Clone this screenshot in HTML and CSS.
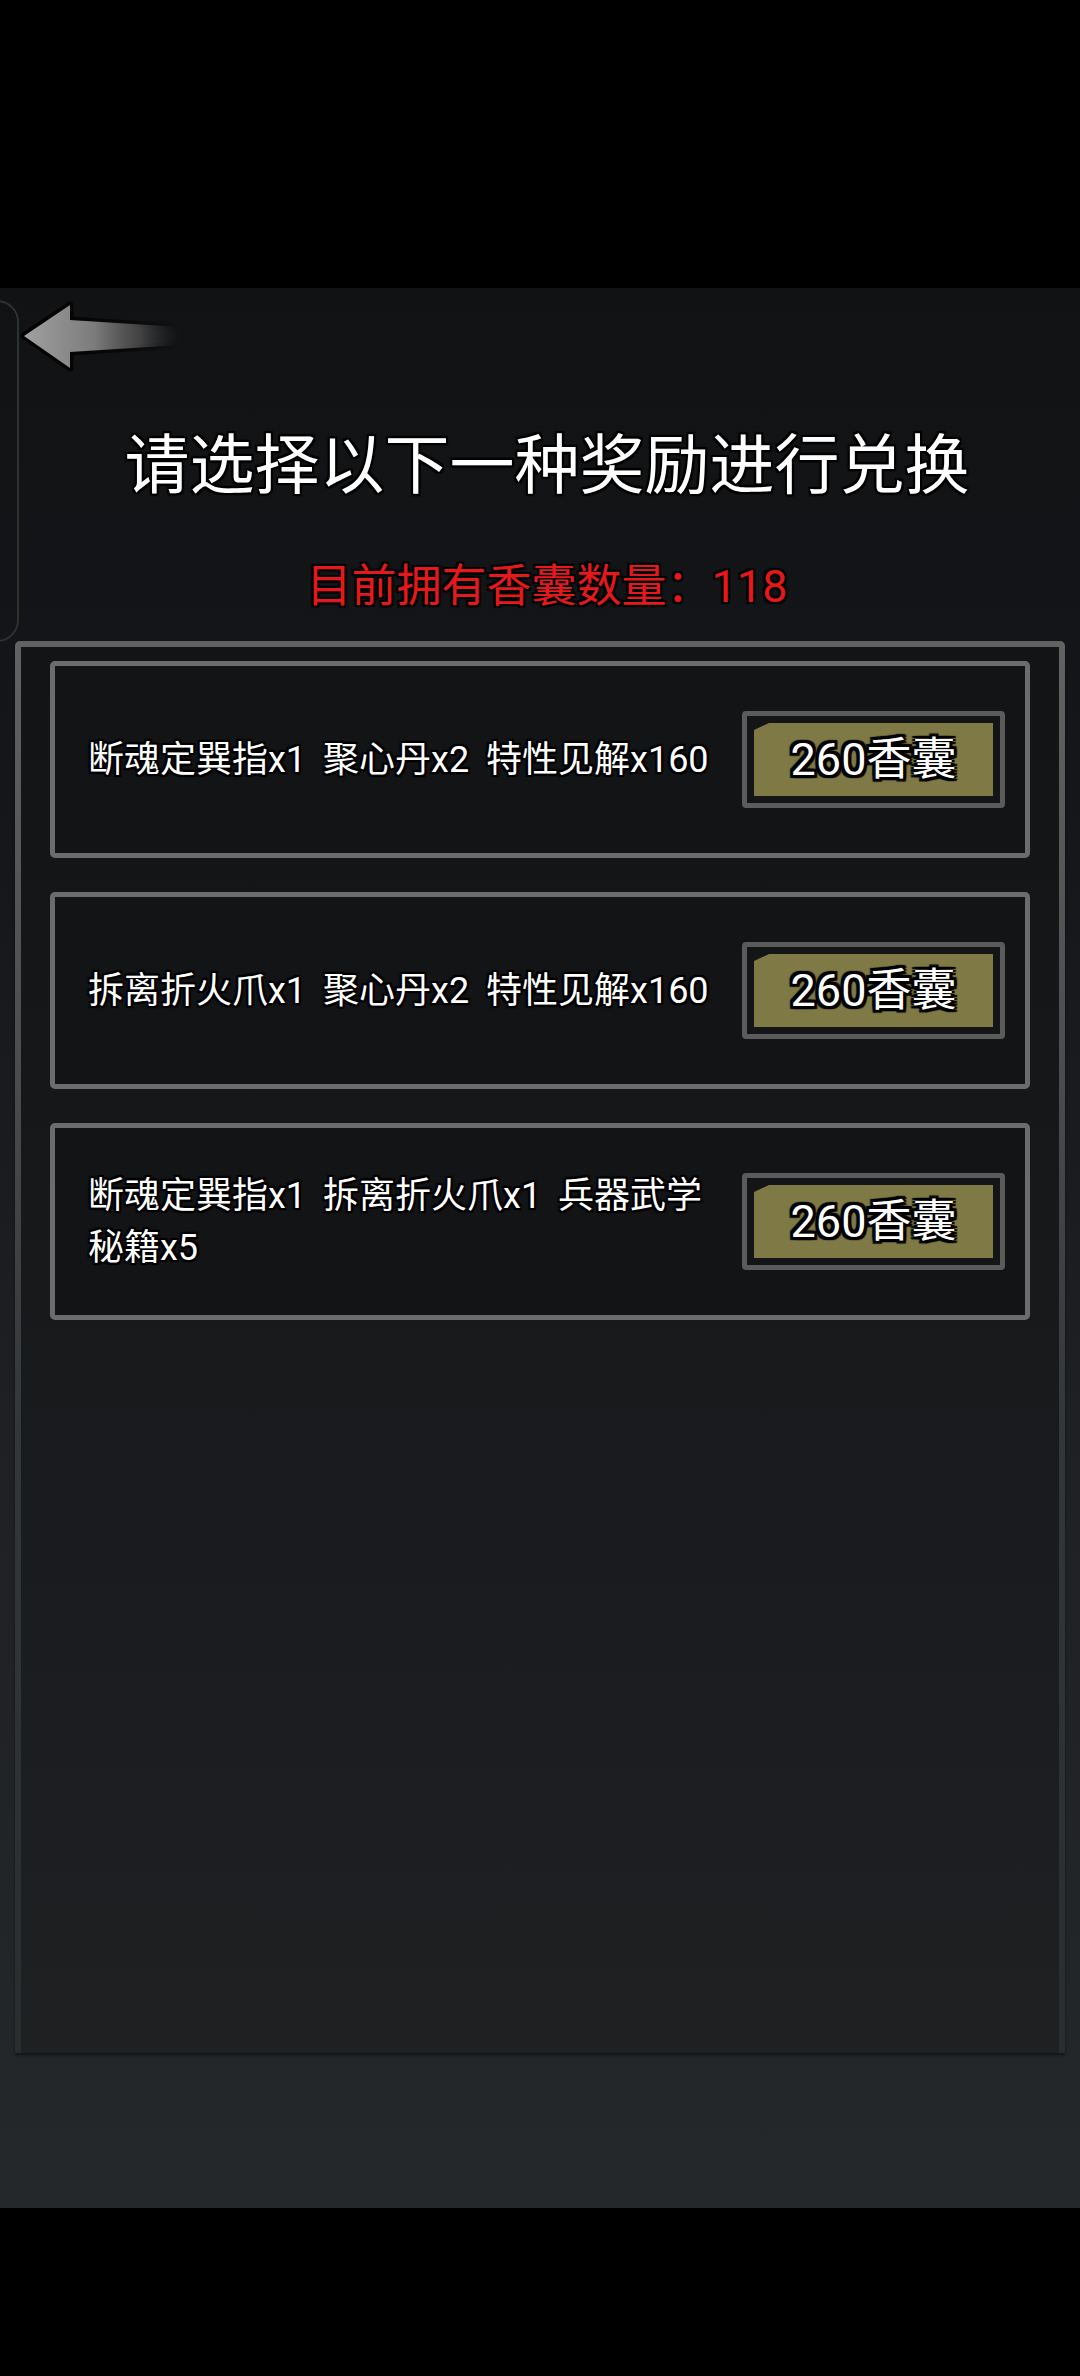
FILE: index.html
```html
<!DOCTYPE html>
<html lang="zh-CN">
<head>
<meta charset="utf-8">
<title>兑换</title>
<link rel="stylesheet" href="styles.css">
</head>
<body>
<div class="statusbar"></div>
<main class="screen">
  <div class="side-tab"></div>
  <header class="topbar">
    <button class="back" aria-label="返回">
      <svg width="200" height="80" viewBox="0 0 200 80">
        <defs>
          <linearGradient id="ag" x1="0" y1="0" x2="1" y2="0">
            <stop offset="0" stop-color="#a0a0a0"/>
            <stop offset="0.45" stop-color="#7c7c7c"/>
            <stop offset="0.75" stop-color="#555555" stop-opacity="0.7"/>
            <stop offset="1" stop-color="#333333" stop-opacity="0"/>
          </linearGradient>
          <linearGradient id="sg" x1="0" y1="0" x2="1" y2="0">
            <stop offset="0" stop-color="#000" stop-opacity="0.9"/>
            <stop offset="0.7" stop-color="#000" stop-opacity="0.5"/>
            <stop offset="1" stop-color="#000" stop-opacity="0"/>
          </linearGradient>
        </defs>
        <polygon points="24,40 70,9 70,24 180,31 180,49 70,56 70,72" fill="none" stroke="url(#sg)" stroke-width="7" stroke-linejoin="round"/>
        <polygon points="24,40 70,9 70,24 180,31 180,49 70,56 70,72" fill="url(#ag)"/>
      </svg>
    </button>
  </header>
  <h1 class="title">请选择以下一种奖励进行兑换</h1>
  <p class="balance">目前拥有香囊数量：118</p>
  <section class="panel">
    <div class="panel-inner">
      <div class="card">
        <p class="reward">断魂定巽指x1 聚心丹x2 特性见解x160</p>
        <button class="buy"><span class="buy-face">260香囊</span></button>
      </div>
      <div class="card">
        <p class="reward">拆离折火爪x1 聚心丹x2 特性见解x160</p>
        <button class="buy"><span class="buy-face">260香囊</span></button>
      </div>
      <div class="card">
        <p class="reward">断魂定巽指x1 拆离折火爪x1 兵器武学秘籍x5</p>
        <button class="buy"><span class="buy-face">260香囊</span></button>
      </div>
    </div>
  </section>
</main>
<div class="navbar"></div>
</body>
</html>
```
FILE: styles.css
```css
* { box-sizing: border-box; }
html, body {
  margin: 0;
  padding: 0;
  background: #000;
}
body {
  width: 1080px;
  font-family: Roboto, "Noto Sans CJK SC", "Noto Sans", sans-serif;
  color: #fff;
}
.statusbar {
  height: 288px;
  background: #000;
}
.navbar {
  height: 168px;
  background: #000;
}
.screen {
  position: relative;
  height: 1920px;
  overflow: hidden;
  background: linear-gradient(180deg, #111214 0%, #16171a 30%, #1e2023 60%, #25282b 100%);
  display: flex;
  flex-direction: column;
}
.side-tab {
  position: absolute;
  left: -30px;
  top: 12px;
  width: 49px;
  height: 342px;
  border: 2px solid #2d332e;
  border-radius: 22px;
}
.topbar {
  height: 88px;
  padding-top: 8px;
}
.back {
  display: block;
  margin: 0;
  padding: 0;
  border: 0;
  background: none;
  width: 200px;
  height: 80px;
}
.back svg { display: block; }
.title {
  margin: 50px 0 0;
  padding-left: 14px;
  font-size: 65px;
  line-height: 80px;
  font-weight: 400;
  text-align: center;
  letter-spacing: 0;
  text-shadow: 0 0 2px #000, 2px 2px 1px #000, -2px -2px 1px #000, 2px -2px 1px #000, -2px 2px 1px #000, 0 2px 1px #000, 0 -2px 1px #000;
}
.balance {
  margin: 53px 0 0;
  padding-left: 14px;
  font-size: 45px;
  line-height: 56px;
  text-align: center;
  color: #e5191c;
  text-shadow: 0 0 2px #000, 2px 2px 1px #000, -2px -2px 1px #000, 2px -2px 1px #000, -2px 2px 1px #000;
}
.panel {
  margin: 26px 15px 0;
  height: 1412px;
  padding: 6px 6px 0;
  border-radius: 5px 5px 0 0;
  background: linear-gradient(180deg, #626262 0%, #4f5051 25%, #34373a 55%, #2a2d30 100%);
  box-shadow: 0 2px 3px rgba(0,0,0,0.5);
}
.panel-inner {
  height: 100%;
  padding: 14px 29px 0;
  background: linear-gradient(180deg, #131416 0%, #17181a 40%, #1c1d20 75%, #1f2022 100%);
  display: flex;
  flex-direction: column;
  gap: 34px;
}
.card {
  height: 197px;
  border: 5px solid #6c6c6c;
  border-radius: 5px;
  background: #131416;
  display: flex;
  align-items: center;
  justify-content: space-between;
  padding: 0 20px 0 33px;
}
.reward {
  margin: 0;
  width: 634px;
  font-size: 36px;
  line-height: 52px;
  word-spacing: 8px;
  color: #fff;
  text-shadow: 0 0 2px #000, 2px 2px 1px #000, -2px -2px 1px #000, 2px -2px 1px #000, -2px 2px 1px #000, 0 2px 1px #000, 0 -2px 1px #000;
}
.buy {
  width: 263px;
  height: 97px;
  margin: 0;
  padding: 7px;
  border: 5px solid #5b5b5b;
  border-radius: 4px;
  background: #141517;
  display: flex;
  font-family: inherit;
}
.buy-face {
  flex: 1;
  display: flex;
  align-items: center;
  justify-content: center;
  background: #7f7a45;
  clip-path: polygon(0 7px, 15px 0, 100% 0, 100% 100%, 0 100%);
  color: #fff;
  font-size: 45px;
  line-height: 1;
  text-shadow: 0 0 2px #000, 3px 3px 1px #000, -3px -3px 1px #000, 3px -3px 1px #000, -3px 3px 1px #000, 0 3px 1px #000, 0 -3px 1px #000, 3px 0 1px #000, -3px 0 1px #000;
}
```
